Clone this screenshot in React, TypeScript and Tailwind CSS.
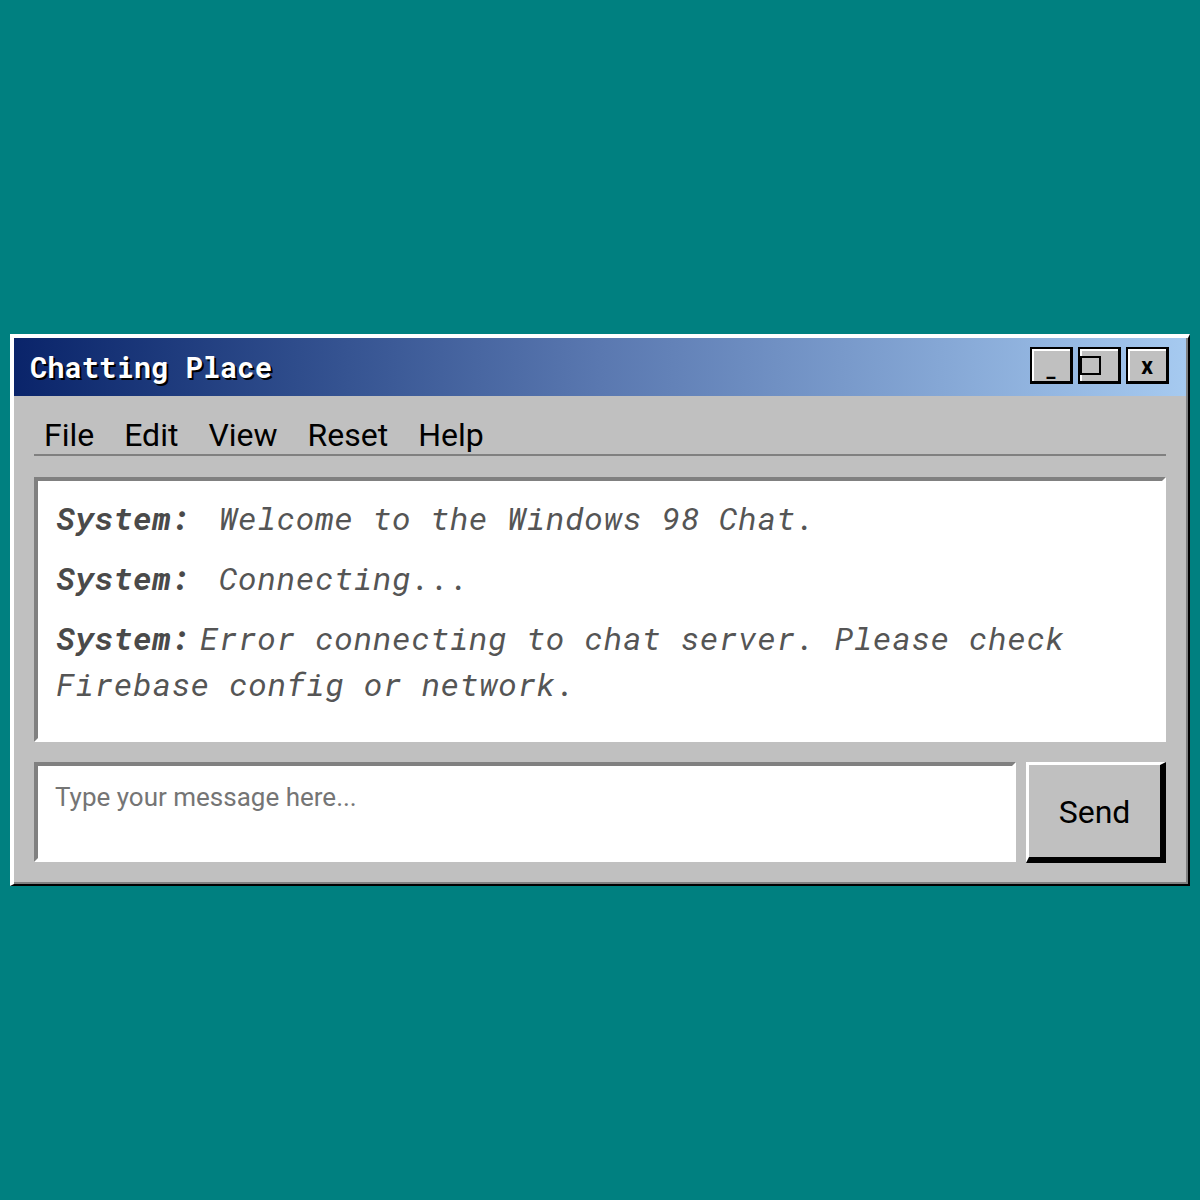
import React from "react";

const mono = { fontFamily: '"Roboto Mono", "DejaVu Sans Mono", "Liberation Mono", monospace' };
const sans = { fontFamily: 'Roboto, "Noto Sans", "Liberation Sans", sans-serif' };

function TitleButton({ children }: { children: React.ReactNode }) {
  return (
    <div className="relative w-[43px] h-[37px] bg-[#c0c0c0] border-t-2 border-l-2 border-black border-r-[3px] border-b-[3px] shadow-[inset_2px_2px_0_#ffffff] flex items-center justify-center">
      {children}
    </div>
  );
}

export default function App() {
  const messages = [
    { who: "System:", text: " Welcome to the Windows 98 Chat." },
    { who: "System:", text: " Connecting..." },
    { who: "System:", text: "Error connecting to chat server. Please check Firebase config or network." },
  ];
  return (
    <div className="w-[1200px] h-[1200px] bg-[#008080] pt-[334px] pl-[10px]">
      <div className="w-[1180px] h-[552px] border-t-4 border-l-4 border-white border-r-2 border-b-2 border-r-black border-b-black">
        <div className="w-full h-full bg-[#c0c0c0] border-r-2 border-b-2 border-[#808080] flex flex-col">
          <div className="h-[58px] bg-gradient-to-r from-[#0a246a] via-[#5a78b0] to-[#a6caf0] flex items-center justify-between pl-[16px] pr-[17px] shrink-0">
            <span
              className="text-white font-bold text-[28.8px] leading-none [text-shadow:2px_2px_0_#000]"
              style={mono}
            >
              Chatting Place
            </span>
            <div className="flex gap-[5px] -mt-[3px]">
              <TitleButton>
                <span className="text-black text-[20px] font-bold leading-none mt-[10px]" style={sans}>_</span>
              </TitleButton>
              <TitleButton>
                <div className="absolute left-0 top-[7px] w-[21px] h-[19px] border-2 border-black" />
              </TitleButton>
              <TitleButton>
                <span className="text-black text-[23px] font-bold leading-none mt-[2px]" style={sans}>x</span>
              </TitleButton>
            </div>
          </div>
          <div className="px-[20px] flex-1 flex flex-col pb-[20px]">
            <div className="h-[60px] border-b-2 border-[#808080] flex items-end pl-[10px] gap-[30px] pb-[0px]" style={sans}>
              {["File", "Edit", "View", "Reset", "Help"].map((m) => (
                <span key={m} className="text-black text-[32px] leading-[38px]">{m}</span>
              ))}
            </div>
            <div className="mt-[21px] h-[265px] bg-white border-t-4 border-l-4 border-[#808080] border-r-4 border-b-4 border-r-white border-b-white px-[18px] pt-[14px]">
              {messages.map((m, i) => (
                <p key={i} className="text-[32px] leading-[46px] tracking-[0.45px] italic text-[#555555] mb-[14px] whitespace-pre-wrap" style={mono}>
                  <span className="font-bold text-[#4a4a4a] mr-[9px]">{m.who}</span>
                  {m.text}
                </p>
              ))}
            </div>
            <div className="mt-[20px] flex gap-[10px]">
              <textarea
                placeholder="Type your message here..."
                className="w-[982px] h-[100px] bg-white border-t-4 border-l-4 border-[#808080] border-r-4 border-b-4 border-r-white border-b-white px-[17px] py-[16px] text-[26px] leading-[30px] text-black placeholder:text-[#757575] resize-none outline-none"
                style={sans}
              />
              <button
                className="w-[140px] h-[101px] bg-[#c0c0c0] border-t-[3px] border-l-[3px] border-white border-r-[6px] border-b-[6px] border-r-black border-b-black text-black text-[32px] flex items-center justify-center pt-[2px]"
                style={sans}
              >
                Send
              </button>
            </div>
          </div>
        </div>
      </div>
    </div>
  );
}
